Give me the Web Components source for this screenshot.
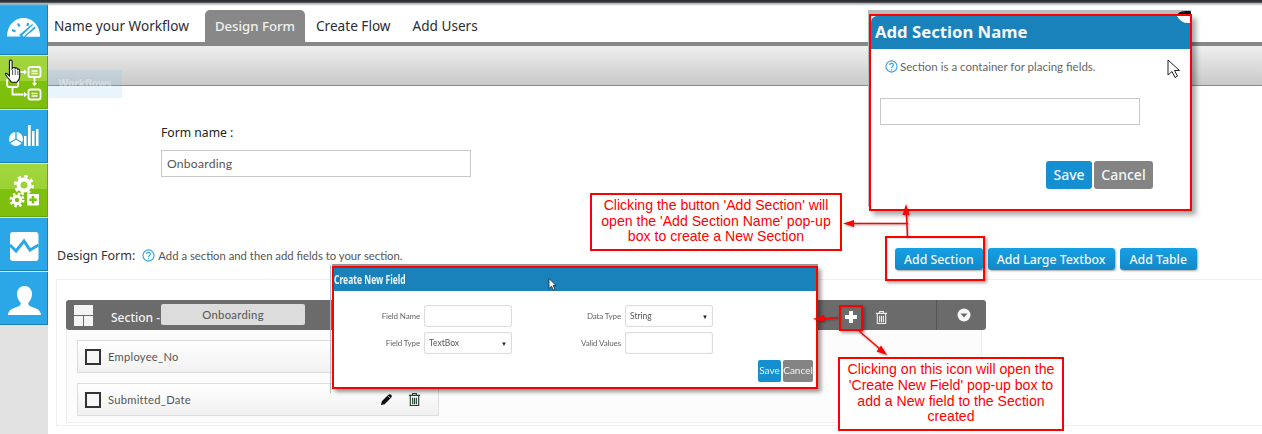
<!DOCTYPE html>
<html lang="en">
<head>
<meta charset="utf-8">
<title>Design Form</title>
<style>
  html, body { margin: 0; padding: 0; background: #fff; }
  body { width: 1262px; height: 434px; overflow: hidden; font-family: "Noto Sans", sans-serif; color: #333; }
</style>
</head>
<body>

<wf-app>
  <wf-sidebar slot="side">
    <nav-tile>
      <svg viewBox="0 0 48 52" width="48" height="52">
        <path d="M7 34.500C7 23 15 16 23.500 16S40 23 40 34.500z" fill="#fff"/>
        <path d="M12 28l3.500 1.500M18 21.500l1.500 3M28 21l-.5 3" stroke="#2ba6e6" stroke-width="2.200"/>
        <path d="M21 35l13-11" stroke="#2ba6e6" stroke-width="5.500"/>
        <path d="M23 34l11-10.500" stroke="#fff" stroke-width="2.200"/>
        <path d="M26 34.500h14v-3h-11z" fill="#fff"/>
      </svg>
    </nav-tile>
    <nav-tile green>
      <svg viewBox="0 0 48 52" width="48" height="52" fill="none" stroke="#fff" stroke-width="1.800">
        <rect x="28.500" y="11" width="12" height="10" rx="2"/>
        <rect x="28.500" y="33.500" width="12" height="10" rx="2"/>
        <rect x="7" y="23" width="11" height="8" rx="2"/>
        <path d="M31.500 15h6M31.500 17.500h6M31.500 37.500h6M31.500 40h6" stroke-width="1.400"/>
        <path d="M34.500 22v7M12.500 32v6.500h11M19 16h5"/>
        <path d="M32 27l2.500 3.500 2.500-3.500zM24 36l3.500 2.500-3.500 2.500zM24 13.500l3 2.500-3 2.500z" fill="#fff" stroke="none"/>
      </svg>
    </nav-tile>
    <nav-tile>
      <svg viewBox="0 0 48 52" width="48" height="52">
        <circle cx="16" cy="29" r="7" fill="#fff"/>
        <path d="M16 29v-7M16 29l-6.500 4M16 29l6.500 4" stroke="#2ba6e6" stroke-width="1.400"/>
        <path d="M24 26h2.500v10H24zM28 15h2.700v21H28zM32 21h2.500v15H32zM36 19h2.500v17H36z" fill="#fff"/>
      </svg>
    </nav-tile>
    <nav-tile green>
      <svg viewBox="0 0 48 52" width="48" height="52">
        <g fill="none" stroke="#fff">
          <circle cx="24" cy="21" r="5.500" stroke-width="4"/>
          <circle cx="24" cy="21" r="8.700" stroke-width="2.600" stroke-dasharray="3.400 3.430"/>
          <circle cx="17" cy="36" r="3.700" stroke-width="3"/>
          <circle cx="17" cy="36" r="6.300" stroke-width="2.400" stroke-dasharray="2.500 2.450"/>
        </g>
        <rect x="27" y="30" width="12" height="11.500" rx="1" fill="#fff"/>
        <path d="M33 32v7.500M29.300 35.800h7.400" stroke="#7fc10f" stroke-width="2.600"/>
      </svg>
    </nav-tile>
    <nav-tile>
      <svg viewBox="0 0 48 52" width="48" height="52">
        <rect x="10" y="14" width="28.500" height="29" rx="3" fill="#fff"/>
        <path d="M10 27l6 6 8-10 6 9 8.500-5" fill="none" stroke="#2ba6e6" stroke-width="3"/>
      </svg>
    </nav-tile>
    <nav-tile>
      <svg viewBox="0 0 48 52" width="48" height="52">
        <path d="M24.500 14c4.500 0 7.500 3.500 7.500 8 0 4-1.800 7-3.800 9 0 2 1 3 4 4 5 1.700 8.300 3 8.800 8H8c.5-5 3.800-6.300 8.800-8 3-1 4-2 4-4-2-2-3.800-5-3.800-9 0-4.500 3-8 7.500-8z" fill="#fff"/>
      </svg>
    </nav-tile>
  </wf-sidebar>

  <wf-tabs slot="tabs">
    <tab-item style="margin-left:6px">Name your Workflow</tab-item>
    <tab-item active style="margin-left:16px">Design Form</tab-item>
    <tab-item style="margin-left:11px">Create Flow</tab-item>
    <tab-item style="margin-left:22px">Add Users</tab-item>
  </wf-tabs>
  <wf-toolbar slot="tabs"></wf-toolbar>

  <form-name slot="body" label="Form name :" value="Onboarding"></form-name>

  <design-head slot="body">
    <span slot="label">Design Form:</span>
    <help-note slot="note">Add a section and then add fields to your section.</help-note>
    <wf-button slot="actions">Add Section</wf-button>
    <wf-button slot="actions">Add Large Textbox</wf-button>
    <wf-button slot="actions" style="padding:0 10px">Add Table</wf-button>
  </design-head>

  <section-panel slot="body" name="Onboarding">
    <field-row>Employee_No</field-row>
    <field-row>Submitted_Date</field-row>
  </section-panel>

  <!-- things lying over the page -->
  <add-section-popup slot="over"></add-section-popup>
  <create-field-popup slot="over"></create-field-popup>
  <call-out slot="over" style="left:590px;top:193px;width:252px;height:58px">Clicking the button 'Add Section' will open the 'Add Section Name' pop-up box to create a New Section</call-out>
  <call-out slot="over" style="left:838px;top:357px;width:226px;height:74px">Clicking on this icon will open the 'Create New Field' pop-up box to add a New field to the Section created</call-out>
  <red-box slot="over" style="left:885px;top:236px;width:100px;height:45px"></red-box>
  <red-box slot="over" style="left:839px;top:305px;width:24px;height:26px"></red-box>
  <note-arrows slot="over"></note-arrows>
</wf-app>

<script>
  const TRASH = `<svg viewBox="0 0 14 16" width="13" height="15" fill="none" stroke="currentColor" stroke-width="1.200">
    <path d="M1 3.500h12M5 3V1.500h4V3M2.500 4v10.500h9V4M5 6v7M7 6v7M9 6v7"/></svg>`;
  const HELP = `<svg viewBox="0 0 14 14" width="13" height="13" fill="none" stroke="#2f9fe0" stroke-width="1.200">
    <circle cx="7" cy="7" r="6"/><path d="M5 5.500c0-2.500 4-2.500 4 0 0 1.500-2 1.500-2 3"/><path d="M7 9.800v1.300"/></svg>`;

  // small base so every element only states its markup
  class ShadowBase extends HTMLElement {
    static markup = '';
    constructor() {
      super();
      this.attachShadow({mode: 'open'}).innerHTML = this.constructor.markup;
    }
  }

  class WfApp extends ShadowBase {
    static markup = `
      <style>
        :host { display: grid; grid-template-columns: 48px 1fr; width: 1262px; height: 434px; position: relative; overflow: hidden; }
        .top { position: absolute; left: 0; top: 0; right: 0; height: 6px; z-index: 5;
               background: linear-gradient(#2a2d31 0, #33363a 35%, #bbb 60%, rgba(255,255,255,0) 100%); }
        .side { grid-column: 1; }
        .main { grid-column: 2; min-width: 0; }
        .ghost { position: absolute; left: 48px; top: 70px; width: 74px; height: 28px; background: rgba(120,190,240,.16);
                 color: rgba(255,255,255,.4); font: bold 10px "Noto Sans", sans-serif; line-height: 27px; text-align: center; }
        .hand { position: absolute; left: 4px; top: 59px; z-index: 30; }
        .arrow { position: absolute; z-index: 30; }
      </style>
      <div class="top"></div>
      <div class="side"><slot name="side"></slot></div>
      <div class="main"><slot name="tabs"></slot><slot name="body"></slot></div>
      <div class="ghost">Workflows</div>
      <slot name="over"></slot>
      <svg class="hand" width="18" height="25" viewBox="0 0 20 28">
        <path d="M6 2c1-1.500 3-1 3 1v8l1-1c1-1 2.500-.500 2.500.500 1-1 2.500-.500 2.500 1 1-.500 2.500 0 2.500 1.500v6c0 3-2 6-3 7H8c-1-2-6-7-6.500-9.500C1 16 3 15.500 4 17l2 2V3z" fill="#fff" stroke="#111" stroke-width="1.200"/>
        <path d="M9.500 12v6M12.500 12v6M15.500 13v5" stroke="#111" stroke-width=".8"/>
      </svg>
      <svg class="arrow" style="left:1167px;top:59px" width="14" height="20" viewBox="0 0 14 20">
        <path d="M1 1v15l4-3.500 3 6 2.500-1.300-3-5.700H12.500z" fill="#fff" stroke="#222" stroke-width="1"/>
      </svg>
      <svg class="arrow" style="left:548px;top:278px" width="9" height="13" viewBox="0 0 9 13">
        <path d="M1 .5v10l2.500-2.300 2 4 1.600-.8-2-3.900H8z" fill="#fff" stroke="#222" stroke-width=".8"/>
      </svg>`;
  }

  class WfSidebar extends ShadowBase {
    static markup = `
      <style>
        :host { display: flex; flex-direction: column; height: 434px; box-sizing: border-box; padding-top: 2px; background: #e2e2e2; gap: 1px; }
      </style>
      <slot></slot>`;
  }

  class NavTile extends ShadowBase {
    static markup = `
      <style>
        :host { display: block; width: 48px; height: 53px; box-sizing: border-box; overflow: hidden;
                background: #2ba6e6; border-right: 1px solid #1a7fb8; border-bottom: 1px solid #1a7fb8; }
        :host([green]) { background: linear-gradient(#a3d63f 0, #9cd236 48%, #7fc10f 48%, #7cbe0b 100%);
                border-right-color: #6aa50a; border-bottom: 1px solid #6aa50a; }
        ::slotted(svg) { display: block; }
      </style>
      <slot></slot>`;
  }

  class WfTabs extends ShadowBase {
    static markup = `
      <style>
        :host { display: flex; align-items: flex-end; height: 46px; box-sizing: border-box; border-bottom: 4px solid #888; }
      </style>
      <slot></slot>`;
  }

  class TabItem extends ShadowBase {
    static markup = `
      <style>
        :host { display: block; height: 32px; font: 13.600px/32px "Noto Sans", sans-serif; color: #2c2c33; white-space: nowrap; }
        :host([active]) { background: #888; color: #eef0f2; border-radius: 5px 5px 0 0; padding: 0 10px; font-size: 13.200px; font-weight: 500; }
      </style>
      <slot></slot>`;
  }

  class WfToolbar extends ShadowBase {
    static markup = `
      <style>
        :host { display: block; height: 40px; box-sizing: border-box; border-bottom: 1px solid #8a8a8a; background: linear-gradient(#efefef, #c9c9c9); }
      </style>`;
  }

  class FormName extends ShadowBase {
    static markup = `
      <style>
        :host { display: block; padding: 38px 0 0 113px; height: 159px; box-sizing: border-box; font: 12.200px "Noto Sans", sans-serif; color: #222; }
        label { display: block; height: 26px; line-height: 17px; }
        .input { width: 310px; height: 27px; box-sizing: border-box; border: 1px solid #c8c8c8; padding-left: 5px; font: 12.200px/26px Lato, sans-serif; letter-spacing: .2px; color: #555; }
      </style>
      <label></label>
      <div class="input"></div>`;
    connectedCallback() {
      this.shadowRoot.querySelector('label').textContent = this.getAttribute('label');
      this.shadowRoot.querySelector('.input').textContent = this.getAttribute('value');
    }
  }

  class DesignHead extends ShadowBase {
    static markup = `
      <style>
        :host { display: flex; align-items: flex-start; height: 34px; padding-left: 9px; padding-right: 65px; font: 12.500px "Noto Sans", sans-serif; color: #333; }
        .left { display: flex; align-items: center; gap: 7px; padding-top: 2px; }
        .acts { margin-left: auto; display: flex; gap: 5px; padding-top: 3px; }
      </style>
      <div class="left"><slot name="label"></slot><slot name="note"></slot></div>
      <div class="acts"><slot name="actions"></slot></div>`;
  }

  class HelpNote extends ShadowBase {
    static markup = `
      <style>
        :host { display: inline-flex; align-items: center; gap: 3px; font: 11.300px Lato, sans-serif; color: #555; white-space: nowrap; }
        svg { display: block; }
      </style>
      ${HELP}<slot></slot>`;
  }

  class WfButton extends ShadowBase {
    static markup = `
      <style>
        :host { display: block; height: 22px; padding: 0 9px; border-radius: 3px; background: linear-gradient(#14a0e6, #1488c6);
                box-shadow: 1px 1px 2px rgba(0,0,0,.35); color: #f2f7fb; font: 500 12.300px/23px "Noto Sans", sans-serif; white-space: nowrap; }
      </style>
      <slot></slot>`;
  }

  class SectionPanel extends ShadowBase {
    static markup = `
      <style>
        :host { display: block; margin-left: 8px; height: 147px; box-sizing: border-box; padding: 20px 0 0 9px; border: 1px solid #eee; border-right: 0; font: 12px "Noto Sans", sans-serif; }
        .head { display: flex; align-items: center; width: 920px; height: 30px; box-sizing: border-box; padding: 0 0 0 8px; background: #6b6b6b; border-radius: 3px; color: #f2f2f2; }
        .lay { display: grid; grid-template-columns: 9px 9px; gap: 1px; margin-right: 18px; width: 19px; }
        .lay i { background: #f4f4f4; height: 10px; display: block; }
        .lay i:first-child { grid-column: 1 / 3; }
        .title { font-weight: 500; padding-top: 5px; margin-right: 1px; white-space: nowrap; }
        .chip { width: 144px; height: 21px; margin-top: -1px; background: #dcdcdc; color: #555; border-radius: 2px; text-align: center; font: 11.300px/21px Lato, sans-serif; letter-spacing: .3px; }
        .ops { margin-left: auto; display: flex; align-items: center; height: 30px; color: #eee; }
        .plus { width: 14px; height: 14px; margin-top: 4px; }
        .trash { margin: 4px 48px 0 17px; display: block; height: 15px; }
        .more { border-left: 1px solid #555; height: 30px; width: 50px; box-sizing: border-box; padding-left: 20px; display: flex; align-items: center; }
        .body { width: 916px; height: 93px; box-sizing: border-box; padding: 10px 0 0 10px; background: #fcfcfc; border: 1px solid #eee; border-top: 0; display: flex; flex-direction: column; gap: 10px; }
      </style>
      <div class="head">
        <div class="lay"><i></i><i></i><i></i></div>
        <span class="title">Section -</span>
        <div class="chip"></div>
        <div class="ops">
          <svg class="plus" viewBox="0 0 14 14"><path d="M7 1v12M1 7h12" stroke="#fff" stroke-width="4"/></svg>
          <span class="trash">${TRASH}</span>
          <div class="more">
            <svg viewBox="0 0 14 14" width="14" height="14"><circle cx="7" cy="7" r="6.500" fill="#f6f6f6"/><path d="M3.500 5.500h7L7 9.500z" fill="#6b6b6b"/></svg>
          </div>
        </div>
      </div>
      <div class="body"><slot></slot></div>`;
    connectedCallback() {
      this.shadowRoot.querySelector('.chip').textContent = this.getAttribute('name');
    }
  }

  class FieldRow extends ShadowBase {
    static markup = `
      <style>
        :host { display: flex; align-items: center; width: 362px; height: 33px; box-sizing: border-box; padding: 0 17px 0 7px; border: 1px solid #ddd;
                background: linear-gradient(#fff, #f1f1f1); font: 11.200px Lato, sans-serif; color: #555; letter-spacing: .25px; }
        .check { width: 16px; height: 16px; box-sizing: border-box; border: 2px solid #333; margin-right: 7px; background: #f7f7f7; }
        .tools { margin-left: auto; display: flex; align-items: center; gap: 15px; color: #23402f; }
        svg { display: block; }
      </style>
      <div class="check"></div>
      <slot></slot>
      <div class="tools">
        <svg viewBox="0 0 14 14" width="13" height="13"><path d="M1 13l1-4 7-7c1-1 2-1 3 0s1 2 0 3l-7 7z" fill="#111"/><path d="M8.500 3l2.500 2.500" stroke="#fff" stroke-width=".8"/></svg>
        ${TRASH}
      </div>`;
  }

  class AddSectionPopup extends ShadowBase {
    static markup = `
      <style>
        :host { position: absolute; left: 869px; top: 14px; width: 323px; height: 197px; box-sizing: border-box; z-index: 12; background: #fff;
                border: 2px solid #f00; box-shadow: 4px 4px 5px rgba(0,0,0,.35), -1px -4px 0 #bdbdbd; font-family: "Noto Sans", sans-serif; }
        .close { position: absolute; left: 299px; top: -6px; display: block; }
        h2 { margin: 0; height: 33px; padding-left: 4px; background: #1a82bb; color: #f4f8fb; font: bold 16.700px/32px "Noto Sans", sans-serif; border-radius: 6px 0 0 0; }
        .note { display: flex; align-items: center; gap: 2px; padding: 10px 0 0 14px; font: 11.500px Lato, sans-serif; color: #666; height: 15px; }
        .input { margin: 24px 0 0 9px; width: 260px; height: 27px; box-sizing: border-box; border: 1px solid #c8c8c8; }
        .btns { display: flex; gap: 2px; margin: 36px 0 0 175px; }
        .b { height: 28px; border-radius: 3px; background: #148fd2; color: #f4f8fb; font-size: 14px; line-height: 27px; text-align: center; width: 46px; font-weight: 500; }
        .c { background: #848484; width: 59px; }
      </style>
      <h2>Add Section Name</h2>
      <svg class="close" width="21" height="16" viewBox="1170 10 21 16">
        <path d="M1177 16a13 13 0 0 0 13 7v-7z" fill="#fff"/>
        <path d="M1178 14c0-3 12-4 14-2v2z" fill="#111"/>
        <path d="M1170 15h21" stroke="#f00" stroke-width="2"/>
      </svg>
      <div class="note">${HELP}<span>Section is a container for placing fields.</span></div>
      <div class="input"></div>
      <div class="btns"><div class="b">Save</div><div class="b c">Cancel</div></div>`;
  }

  class CreateFieldPopup extends ShadowBase {
    static markup = `
      <style>
        :host { position: absolute; left: 332px; top: 266px; width: 486px; height: 123px; box-sizing: border-box; z-index: 11; background: #fff;
                border: 2px solid #f00; box-shadow: 3px 3px 4px rgba(0,0,0,.4), 0 -2px 0 #999; font-family: Lato, sans-serif; }
        .edge { position: absolute; left: -4px; top: -3px; bottom: -6px; width: 1px; background: #bbb; }
        .soft { position: relative; height: 100%; filter: blur(.3px); }
        h3 { margin: 0; height: 23px; background: #1a82bb; color: #eef4f8; font: bold 12.500px/23px "Noto Sans", sans-serif; overflow: hidden; white-space: nowrap; }
        h3 span { display: inline-block; transform: scaleX(.68); transform-origin: 0 50%; }
        .grid { display: grid; grid-template-columns: 86px 88px 105px 88px; column-gap: 4px; row-gap: 5px; padding: 14px 0 0 0; align-items: center; font-size: 8px; color: #666; }
        .l { text-align: right; letter-spacing: -.15px; }
        .f { height: 22px; box-sizing: border-box; border: 1px solid #ddd; border-radius: 2px; box-shadow: inset 0 0 1px #ccc; display: flex; align-items: center; justify-content: space-between; padding: 0 4px; color: #555; font-size: 8.500px; }
        .f i { font-style: normal; color: #222; font-size: 6px; }
        .btns { position: absolute; right: 3px; bottom: 5px; display: flex; gap: 2px; }
        .b { height: 22px; line-height: 21px; background: #148fd2; color: #eef4f8; border-radius: 2px; font-size: 10px; text-align: center; width: 23px; }
        .c { background: #848484; width: 30px; }
      </style>
      <div class="edge"></div>
      <div class="soft">
        <h3><span>Create New Field</span></h3>
        <div class="grid">
          <div class="l">Field Name</div><div class="f"></div>
          <div class="l">Data Type</div><div class="f">String<i>▼</i></div>
          <div class="l">Field Type</div><div class="f">TextBox<i>▼</i></div>
          <div class="l">Valid Values</div><div class="f"></div>
        </div>
        <div class="btns"><div class="b">Save</div><div class="b c">Cancel</div></div>
      </div>`;
  }

  class CallOut extends ShadowBase {
    static markup = `
      <style>
        :host { position: absolute; z-index: 13; display: flex; align-items: center; justify-content: center; box-sizing: border-box; padding: 0 6px 1px;
                background: #fff; border: 2px solid #f00;
                color: #f00; font: 14.100px/15.600px "Liberation Sans", Arial, sans-serif; text-align: center; }
      </style>
      <span><slot></slot></span>`;
  }

  class RedBox extends ShadowBase {
    static markup = `
      <style>
        :host { position: absolute; z-index: 13; box-sizing: border-box; border: 2px solid #f00; box-shadow: 2px 2px 3px rgba(0,0,0,.35), inset 1px 1px 1px rgba(0,0,0,.1); }
      </style>`;
  }

  class NoteArrows extends ShadowBase {
    static markup = `
      <style>
        :host { position: absolute; left: 0; top: 0; width: 1262px; height: 434px; z-index: 14; pointer-events: none; }
        svg { display: block; filter: drop-shadow(1px 1px 1px rgba(0,0,0,.35)); }
      </style>
      <svg width="1262" height="434" viewBox="0 0 1262 434" fill="#f00" stroke="none">
        <path d="M907.500 238L906.500 214" stroke="#f00" stroke-width="1.500"/>
        <path d="M906 204l-3.500 11h7z"/>
        <path d="M908 223.500H852" stroke="#f00" stroke-width="1.500"/>
        <path d="M843 223.500l11-3.500v7z"/>
        <path d="M838 317.500L822 319" stroke="#f00" stroke-width="1.500"/>
        <path d="M813 319l11-4 .5 7z"/>
        <path d="M859 331L880 349" stroke="#f00" stroke-width="1.500"/>
        <path d="M887 355l-10.500-3.500 4.500-6z"/>
      </svg>`;
  }

  customElements.define('wf-app', WfApp);
  customElements.define('wf-sidebar', WfSidebar);
  customElements.define('nav-tile', NavTile);
  customElements.define('wf-tabs', WfTabs);
  customElements.define('tab-item', TabItem);
  customElements.define('wf-toolbar', WfToolbar);
  customElements.define('form-name', FormName);
  customElements.define('design-head', DesignHead);
  customElements.define('help-note', HelpNote);
  customElements.define('wf-button', WfButton);
  customElements.define('section-panel', SectionPanel);
  customElements.define('field-row', FieldRow);
  customElements.define('add-section-popup', AddSectionPopup);
  customElements.define('create-field-popup', CreateFieldPopup);
  customElements.define('call-out', CallOut);
  customElements.define('red-box', RedBox);
  customElements.define('note-arrows', NoteArrows);
</script>
</body>
</html>
